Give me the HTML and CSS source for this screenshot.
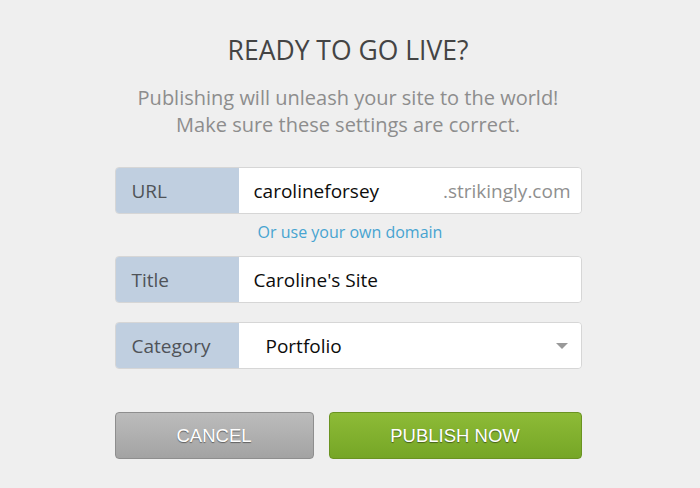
FILE: index.html
```html
<!DOCTYPE html>
<html lang="en">
<head>
    <meta charset="UTF-8">
    <meta name="viewport" content="width=device-width, initial-scale=1.0">
    <title>Publish</title>
    <link rel="stylesheet" href="styles.css">
</head>
<body>

    <div class="publish">
        <h2>READY TO GO LIVE?</h2>
        <p class="intro">Publishing will unleash your site to the world!<br>Make sure these settings are correct.</p>

        <div class="field">
            <label>URL</label>
            <div class="box">
                <span class="value">carolineforsey</span>
                <span class="suffix">.strikingly.com</span>
            </div>
        </div>
        <a class="domain" href="#">Or use your own domain</a>

        <div class="field">
            <label>Title</label>
            <div class="box">
                <span class="value">Caroline's Site</span>
            </div>
        </div>

        <div class="field">
            <label>Category</label>
            <div class="box select">
                <span class="value">Portfolio</span>
                <span class="arrow"></span>
            </div>
        </div>

        <div class="actions">
            <button class="cancel">CANCEL</button>
            <button class="publish-now">PUBLISH NOW</button>
        </div>
    </div>

</body>
</html>
```

FILE: styles.css
```css
body {
    margin: 0;
    background: #efefef;
    font-family: "Open Sans", sans-serif;
}
.publish {
    width: 467px;
    margin: 0 auto;
    padding-top: 33px;
    transform: translateX(-2px);
}
h2 {
    margin: 0;
    text-align: center;
    font-size: 26.5px;
    font-weight: 400;
    color: #444;
    line-height: 34px;
}
.intro {
    margin: 17px 0 29px;
    text-align: center;
    font-size: 20px;
    line-height: 27px;
    color: #8d8d8d;
}
.field {
    display: flex;
    height: 47px;
    border: 1px solid #d6d6d6;
    border-radius: 4px;
    overflow: hidden;
    box-sizing: border-box;
    margin-top: 19px;
}
.field:first-of-type {
    margin-top: 0;
}
.field label {
    width: 123px;
    flex: none;
    background: #c0cfe0;
    color: #4f5358;
    font-size: 19px;
    display: flex;
    align-items: center;
    padding-left: 16px;
    box-sizing: border-box;
}
.box {
    flex: 1;
    background: #fff;
    display: flex;
    align-items: center;
    padding: 0 10px 0 15px;
    font-size: 19px;
}
.value {
    color: #0c0c0c;
    flex: 1;
}
.suffix {
    color: #8f8f8f;
}
.select .value {
    padding-left: 12px;
}
.arrow {
    width: 0;
    height: 0;
    border-left: 6px solid transparent;
    border-right: 6px solid transparent;
    border-top: 6px solid #999;
    margin-right: 3px;
}
.domain {
    display: block;
    text-align: center;
    color: #47a4d1;
    text-decoration: none;
    font-size: 16px;
    line-height: 20px;
    margin: 8px 0 -5px 0;
    transform: translateX(2px);
}
.actions {
    display: flex;
    gap: 15px;
    margin-top: 43px;
}
.actions button {
    height: 47px;
    border-radius: 4px;
    font-family: "Liberation Sans", Arial, sans-serif;
    font-size: 18.5px;
    color: #fff;
    text-shadow: 0 1px 1px rgba(0, 0, 0, 0.45);
    cursor: pointer;
}
.cancel {
    width: 199px;
    background: linear-gradient(#bcbcbc, #a3a3a3);
    border: 1px solid #8e8e8e;
}
.publish-now {
    flex: 1;
    background: linear-gradient(#8dbb37, #76a626);
    border: 1px solid #6a9321;
}
```
